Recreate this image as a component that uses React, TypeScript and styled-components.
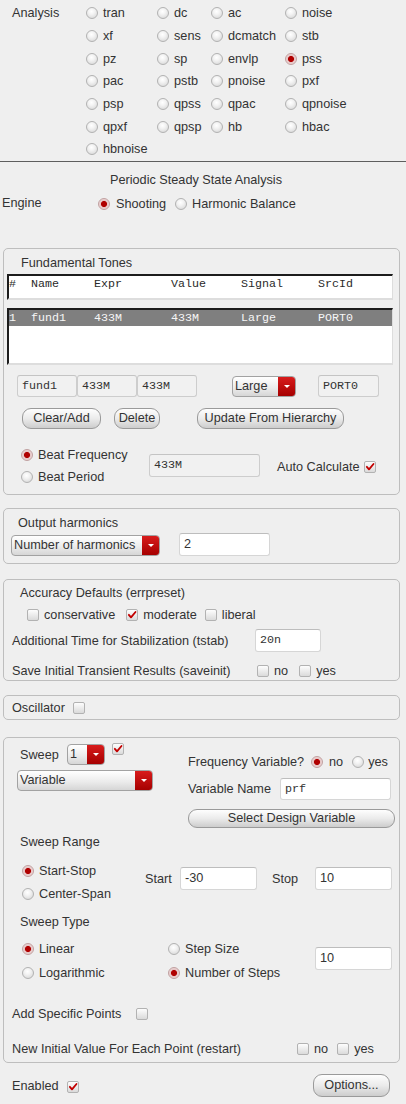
import React from 'react';
import styled, { createGlobalStyle } from 'styled-components';

const GlobalStyle = createGlobalStyle`
  html, body { margin: 0; padding: 0; background: #efefef; }
  body {
    font-family: "Liberation Sans", Arial, sans-serif;
    font-size: 12.7px;
    color: #333333;
  }
  * { box-sizing: border-box; }
`;

const Page = styled.div`
  width: 406px;
  height: 1104px;
  overflow: hidden;
  background: #efefef;
`;

/* ---------- primitives ---------- */

const Choice = styled.span<{ $gap?: number; $ml?: number }>`
  display: inline-flex;
  align-items: center;
  gap: ${p => p.$gap ?? 5}px;
  margin-left: ${p => p.$ml ?? 0}px;
  white-space: nowrap;
  line-height: 16px;
`;

const RadioDot = styled.span<{ $on?: boolean }>`
  display: inline-block;
  flex: none;
  width: 12px;
  height: 12px;
  border-radius: 50%;
  border: 1px solid ${p => (p.$on ? '#c0a0a0' : '#b2b2b2')};
  background: ${p =>
    p.$on
      ? 'radial-gradient(circle at 50% 50%, #b00000 0, #b00000 2.6px, #e6c4c4 3.5px, #f5ecec 100%)'
      : 'radial-gradient(circle at 45% 35%, #ffffff 0, #f3f3f3 35%, #d2d2d2 100%)'};
`;

const Box = styled.span<{ $top?: number }>`
  display: inline-flex;
  flex: none;
  align-items: center;
  justify-content: center;
  width: 12px;
  height: 12px;
  border: 1px solid #b2b2b2;
  border-radius: 2px;
  background: linear-gradient(#fdfdfd, #dadada);
  margin-top: ${p => p.$top ?? 0}px;
`;

const Radio: React.FC<{ on?: boolean; label: string; gap?: number; ml?: number }> = ({ on, label, gap, ml }) => (
  <Choice $gap={gap} $ml={ml}>
    <RadioDot $on={on} />
    {label}
  </Choice>
);

const Check: React.FC<{ on?: boolean; top?: number }> = ({ on, top }) => (
  <Box $top={top}>
    {on && (
      <svg width="12" height="12" viewBox="0 0 12 12">
        <path d="M2.2 5.8 L4.8 8.8 L10.2 2.4" fill="none" stroke="#c20000" strokeWidth="2.2" strokeLinecap="round" strokeLinejoin="round" />
      </svg>
    )}
  </Box>
);

const CheckItem: React.FC<{ on?: boolean; label: string; ml?: number }> = ({ on, label, ml }) => (
  <Choice $gap={5} $ml={ml}>
    <Check on={on} />
    {label}
  </Choice>
);

const SelectBox = styled.div<{ $w: number; $ml?: number }>`
  display: flex;
  flex: none;
  width: ${p => p.$w}px;
  height: 21px;
  margin-left: ${p => p.$ml ?? 0}px;
  border: 1px solid #a2a2a2;
  border-radius: 4px;
  overflow: hidden;
  background: linear-gradient(#ffffff, #ececec 55%, #d6d6d6);
`;

const SelectText = styled.span`
  flex: 1;
  padding-left: 2px;
  line-height: 18px;
  white-space: nowrap;
`;

const SelectArrow = styled.span`
  display: flex;
  align-items: center;
  justify-content: center;
  width: 17px;
  background: linear-gradient(#d81c1c, #a60000);
  &::after {
    content: '';
    border-left: 3px solid transparent;
    border-right: 3px solid transparent;
    border-top: 3px solid #fff;
  }
`;

const Select: React.FC<{ w: number; ml?: number; value: string }> = ({ w, ml, value }) => (
  <SelectBox $w={w} $ml={ml}>
    <SelectText>{value}</SelectText>
    <SelectArrow />
  </SelectBox>
);

const Field = styled.div<{ $w: number; $h?: number; $ml?: number; $mt?: number; $mono?: boolean; $dim?: boolean }>`
  flex: none;
  width: ${p => p.$w}px;
  height: ${p => p.$h ?? 23}px;
  margin-left: ${p => p.$ml ?? 0}px;
  margin-top: ${p => p.$mt ?? 0}px;
  padding-left: 4px;
  line-height: ${p => (p.$h ?? 23) - 2}px;
  border: 1px solid ${p => (p.$dim ? '#cdcdcd' : '#d6d6d6')};
  border-top-color: ${p => (p.$dim ? '#c4c4c4' : '#bdbdbd')};
  border-radius: 3px;
  background: ${p => (p.$dim ? '#f1f1f1' : '#ffffff')};
  font-family: ${p => (p.$mono ? '"Liberation Mono", "DejaVu Sans Mono", monospace' : 'inherit')};
  font-size: ${p => (p.$mono ? '11.7px' : 'inherit')};
  white-space: nowrap;
`;

const Button = styled.button<{ $w: number; $h?: number; $ml?: number; $mt?: number }>`
  flex: none;
  width: ${p => p.$w}px;
  height: ${p => p.$h ?? 21}px;
  margin-left: ${p => p.$ml ?? 0}px;
  margin-top: ${p => p.$mt ?? 0}px;
  padding: 0;
  border: 1px solid #9a9a9a;
  border-radius: 9px;
  background: linear-gradient(#fefefe, #ebebeb 50%, #cdcdcd);
  font: inherit;
  color: #333;
  line-height: 1;
`;

/* ---------- analysis ---------- */

const AnalysisSection = styled.div`
  display: flex;
  height: 161px;
  padding-top: 2px;
`;

const AnalysisLabel = styled.div`
  width: 86px;
  padding-left: 12px;
  line-height: 23px;
`;

const AnalysisGrid = styled.div`
  flex: 1;
  display: grid;
  grid-template-columns: 71px 54px 74px 1fr;
  grid-auto-rows: 22.7px;
  align-items: center;
`;

const Rule = styled.div`
  height: 1px;
  background: #5e5e5e;
`;

const SectionTitle = styled.div`
  margin-top: 10px;
  line-height: 16px;
  text-align: center;
  padding-right: 14px;
`;

const EngineRow = styled.div`
  display: flex;
  align-items: center;
  height: 16px;
  margin-top: 8px;
`;

const EngineLabel = styled.span`
  width: 98px;
  padding-left: 2px;
  margin-top: -2px;
`;

/* ---------- panels ---------- */

const Panel = styled.section<{ $mt: number; $pt?: number; $pb?: number }>`
  margin: ${p => p.$mt}px 6px 0 3px;
  padding: ${p => p.$pt ?? 6}px 6px ${p => p.$pb ?? 6}px 3px;
  border: 1px solid #bebebe;
  border-radius: 5px;
`;

const PanelTitle = styled.div<{ $indent: number; $mt?: number }>`
  line-height: 16px;
  padding-left: ${p => p.$indent}px;
  margin-top: ${p => p.$mt ?? 0}px;
`;

const ToneBox = styled.div<{ $h: number; $mt: number }>`
  height: ${p => p.$h}px;
  margin-top: ${p => p.$mt}px;
  background: #fff;
  border-top: 2px solid #1c1c1c;
  border-left: 2px solid #1c1c1c;
  border-right: 1px solid #dddddd;
  border-bottom: 2px solid #dddddd;
  font-family: "Liberation Mono", "DejaVu Sans Mono", monospace;
  font-size: 11.67px;
`;

const ToneRow = styled.div<{ $sel?: boolean }>`
  display: grid;
  grid-template-columns: 22px 63px 77px 70px 77px 1fr;
  height: 16px;
  line-height: 16px;
  background: ${p => (p.$sel ? '#7f7f7f' : 'transparent')};
  color: ${p => (p.$sel ? '#f6f6f6' : '#2a2a2a')};
`;

const Row = styled.div<{ $mt?: number; $pl?: number; $h?: number; $align?: string }>`
  display: flex;
  align-items: ${p => p.$align ?? 'center'};
  margin-top: ${p => p.$mt ?? 0}px;
  padding-left: ${p => p.$pl ?? 0}px;
  height: ${p => (p.$h ? `${p.$h}px` : 'auto')};
  white-space: nowrap;
`;

const Label = styled.span<{ $w?: number; $ml?: number }>`
  flex: none;
  width: ${p => (p.$w ? `${p.$w}px` : 'auto')};
  margin-left: ${p => p.$ml ?? 0}px;
  line-height: 16px;
`;

const BoxSlot = styled.span<{ $ml?: number; $top?: boolean }>`
  display: inline-flex;
  flex: none;
  margin-left: ${p => p.$ml ?? 0}px;
  align-self: ${p => (p.$top ? 'flex-start' : 'center')};
`;

const Column = styled.div<{ $w?: number; $pl?: number; $pt?: number; $row?: number }>`
  display: flex;
  flex-direction: column;
  flex: none;
  width: ${p => (p.$w ? `${p.$w}px` : 'auto')};
  padding-left: ${p => p.$pl ?? 0}px;
  padding-top: ${p => p.$pt ?? 0}px;
  & > ${Choice} {
    height: ${p => p.$row ?? 22}px;
  }
`;

const BeatBlock = styled.div`
  display: flex;
  margin-top: 15px;
  height: 44px;
`;

const AutoCalc = styled.div`
  display: flex;
  align-items: center;
  gap: 4px;
  margin-left: 17px;
  margin-top: 1px;
`;

const SweepTop = styled.div`
  display: flex;
`;

const Block = styled.div<{ $mt: number; $h: number }>`
  display: flex;
  margin-top: ${p => p.$mt}px;
  height: ${p => p.$h}px;
`;

const InlineFields = styled.div<{ $mt: number }>`
  display: flex;
  align-items: center;
  margin-top: ${p => p.$mt}px;
  align-self: flex-start;
  height: 23px;
`;

const Footer = styled.div`
  display: flex;
  align-items: center;
  height: 23px;
  margin-top: 11px;
  padding-left: 12px;
  padding-right: 16px;
`;

const OptionsButton = styled(Button)`
  margin-left: auto;
`;

const analyses = [
  'tran', 'dc', 'ac', 'noise',
  'xf', 'sens', 'dcmatch', 'stb',
  'pz', 'sp', 'envlp', 'pss',
  'pac', 'pstb', 'pnoise', 'pxf',
  'psp', 'qpss', 'qpac', 'qpnoise',
  'qpxf', 'qpsp', 'hb', 'hbac',
  'hbnoise',
];

const toneHeader = ['#', 'Name', 'Expr', 'Value', 'Signal', 'SrcId'];
const toneData = ['1', 'fund1', '433M', '433M', 'Large', 'PORT0'];

export default function App() {
  return (
    <Page>
      <GlobalStyle />
      <AnalysisSection>
        <AnalysisLabel>Analysis</AnalysisLabel>
        <AnalysisGrid>
          {analyses.map(a => (
            <Radio key={a} label={a} on={a === 'pss'} />
          ))}
        </AnalysisGrid>
      </AnalysisSection>
      <Rule />

      <SectionTitle>Periodic Steady State Analysis</SectionTitle>
      <EngineRow>
        <EngineLabel>Engine</EngineLabel>
        <Radio on label="Shooting" gap={6} />
        <Radio label="Harmonic Balance" gap={5} ml={9} />
      </EngineRow>

      <Panel $mt={36}>
        <PanelTitle $indent={14}>Fundamental Tones</PanelTitle>
        <ToneBox $h={26} $mt={3}>
          <ToneRow>
            {toneHeader.map(h => (
              <span key={h}>{h}</span>
            ))}
          </ToneRow>
        </ToneBox>
        <ToneBox $h={57} $mt={8}>
          <ToneRow $sel>
            {toneData.map((d, i) => (
              <span key={i}>{d}</span>
            ))}
          </ToneRow>
        </ToneBox>
        <Row $mt={10} $pl={10} $h={22}>
          <Field $w={60} $h={22} $mono $dim>fund1</Field>
          <Field $w={60} $h={22} $mono $dim>433M</Field>
          <Field $w={60} $h={22} $mono $dim>433M</Field>
          <Select w={64} ml={35} value="Large" />
          <Field $w={61} $h={22} $ml={22} $mono $dim>PORT0</Field>
        </Row>
        <Row $mt={11} $pl={15} $h={21}>
          <Button $w={79}>Clear/Add</Button>
          <Button $w={46} $ml={13}>Delete</Button>
          <Button $w={147} $ml={37}>Update From Hierarchy</Button>
        </Row>
        <BeatBlock>
          <Column $w={142} $pl={14} $row={22}>
            <Radio on label="Beat Frequency" />
            <Radio label="Beat Period" />
          </Column>
          <Field $w={111} $mt={10} $mono $dim>433M</Field>
          <AutoCalc>
            <Label>Auto Calculate</Label>
            <Check on />
          </AutoCalc>
        </BeatBlock>
      </Panel>

      <Panel $mt={13} $pb={7}>
        <PanelTitle $indent={11}>Output harmonics</PanelTitle>
        <Row $mt={2} $h={23} $align="flex-end">
          <Select w={149} ml={4} value="Number of harmonics" />
          <Field $w={91} $ml={19}>2</Field>
        </Row>
      </Panel>

      <Panel $mt={15} $pt={5} $pb={1}>
        <PanelTitle $indent={13}>Accuracy Defaults (errpreset)</PanelTitle>
        <Row $mt={6} $pl={20} $h={16}>
          <CheckItem label="conservative" />
          <CheckItem on label="moderate" ml={11} />
          <CheckItem label="liberal" ml={8} />
        </Row>
        <Row $mt={6} $pl={5} $h={23}>
          <Label $w={243}>Additional Time for Stabilization (tstab)</Label>
          <Field $w={66} $mono>20n</Field>
        </Row>
        <Row $mt={11} $pl={5} $h={16}>
          <Label $w={245}>Save Initial Transient Results (saveinit)</Label>
          <CheckItem label="no" />
          <CheckItem label="yes" ml={11} />
        </Row>
      </Panel>

      <Panel $mt={14} $pt={0} $pb={0}>
        <Row $pl={5} $h={23}>
          <Label>Oscillator</Label>
          <BoxSlot $ml={8}>
            <Check top={1} />
          </BoxSlot>
        </Row>
      </Panel>

      <Panel $mt={17} $pt={0} $pb={5}>
        <SweepTop>
          <Column $w={181} $pt={6}>
            <Row $h={21}>
              <Label $w={47} $ml={13}>Sweep</Label>
              <Select w={38} value="1" />
              <BoxSlot $ml={7} $top>
                <Check on top={-1} />
              </BoxSlot>
            </Row>
            <Row $mt={5} $pl={10}>
              <Select w={136} value="Variable" />
            </Row>
          </Column>
          <Column $pt={16}>
            <Row $h={16}>
              <Label $w={123}>Frequency Variable?</Label>
              <Radio on label="no" gap={6} />
              <Radio label="yes" gap={4} ml={9} />
            </Row>
            <Row $mt={8} $h={22}>
              <Label $w={92}>Variable Name</Label>
              <Field $w={111} $h={22} $mono>prf</Field>
            </Row>
            <Button $w={207} $h={19} $mt={9}>Select Design Variable</Button>
          </Column>
        </SweepTop>

        <PanelTitle $indent={13} $mt={6}>Sweep Range</PanelTitle>
        <Block $mt={9} $h={46}>
          <Column $w={138} $pl={15} $row={23}>
            <Radio on label="Start-Stop" />
            <Radio label="Center-Span" />
          </Column>
          <InlineFields $mt={8}>
            <Label $w={35}>Start</Label>
            <Field $w={77}>-30</Field>
            <Label $w={43} $ml={15}>Stop</Label>
            <Field $w={77}>10</Field>
          </InlineFields>
        </Block>

        <PanelTitle $indent={13} $mt={9}>Sweep Type</PanelTitle>
        <Block $mt={7} $h={48}>
          <Column $w={161} $pl={15} $row={24}>
            <Radio on label="Linear" />
            <Radio label="Logarithmic" />
          </Column>
          <Column $w={147} $row={24}>
            <Radio label="Step Size" />
            <Radio on label="Number of Steps" />
          </Column>
          <Field $w={77} $mt={10}>10</Field>
        </Block>

        <Row $mt={21} $pl={5} $h={16}>
          <Label $w={124}>Add Specific Points</Label>
          <Check />
        </Row>
        <Row $mt={19} $pl={5} $h={16}>
          <Label $w={285}>New Initial Value For Each Point (restart)</Label>
          <CheckItem label="no" />
          <CheckItem label="yes" ml={9} />
        </Row>
      </Panel>

      <Footer>
        <Label>Enabled</Label>
        <BoxSlot $ml={8}>
          <Check on top={2} />
        </BoxSlot>
        <OptionsButton $w={77} $h={23}>Options...</OptionsButton>
      </Footer>
    </Page>
  );
}
